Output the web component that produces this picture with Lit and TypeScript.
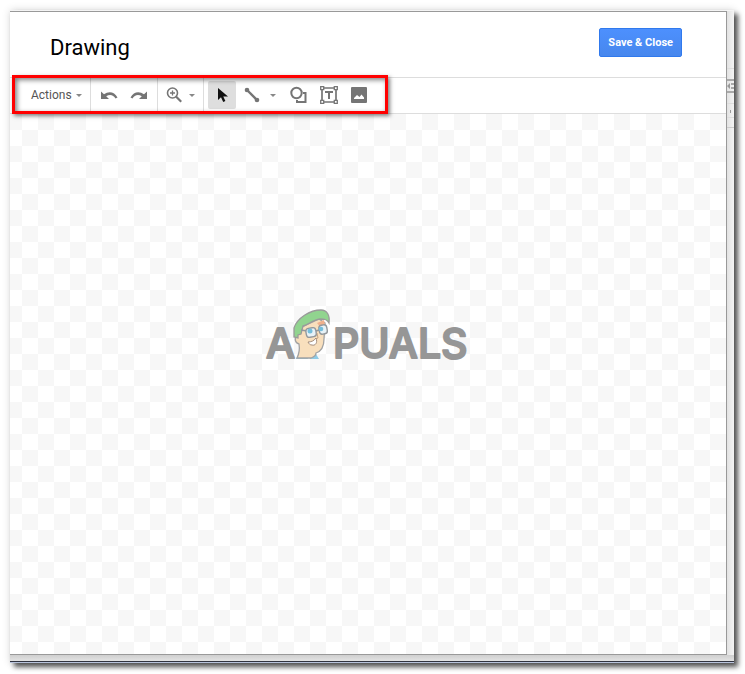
import { LitElement, html, css } from "lit";
import { customElement } from "lit/decorators.js";

@customElement("app-root")
export class AppRoot extends LitElement {
  static styles = css`
    :host {
      display: flex;
      box-sizing: border-box;
      min-height: 100vh;
      padding: 10px 11px 11px 10px;
      background: #fff;
      font-family: Roboto, "Liberation Sans", sans-serif;
    }
    .page {
      flex: 1;
      display: grid;
      grid-template: 1fr 8px / 1fr 7px;
      background: #f4f4f4;
      box-shadow: 4px 4px 5px 0 rgba(0, 0, 0, 0.65), 0 0 8px rgba(0, 0, 0, 0.15);
      padding-top: 1px;
    }
    .dialog {
      display: flex;
      flex-direction: column;
      background: #fff;
      border: 1px solid #999;
      border-left: 0;
    }
    .side {
      background: linear-gradient(90deg, #e2e2e2, #f4f4f4);
    }
    .side svg {
      display: block;
    }
    .foot {
      grid-column: 1 / -1;
      background: linear-gradient(#cfcfcf, #e6e6e6);
      border-bottom: 1px solid #b9c4dc;
      box-shadow: inset 0 -1px #30333f;
    }
    header {
      display: flex;
      justify-content: space-between;
      align-items: flex-start;
      box-sizing: border-box;
      height: 66px;
      padding: 16px 44px 0 40px;
      border-bottom: 1px solid #ddd;
    }
    h1 {
      margin: 4px 0 0;
      font-size: 22px;
      line-height: 32px;
      font-weight: 400;
      color: #000;
    }
    button {
      font-family: inherit;
      margin: 0;
      padding: 0;
      border: 0;
      background: none;
      cursor: pointer;
    }
    .save {
      box-sizing: border-box;
      height: 29px;
      padding: 0 8px;
      border: 1px solid #3079ed;
      border-radius: 2px;
      background: linear-gradient(#4d90fe, #4787ed);
      color: #fff;
      font-size: 11px;
      font-weight: 700;
      line-height: 27px;
    }
    .bar {
      display: flex;
      align-items: flex-start;
      height: 35px;
      border-bottom: 1px solid #ddd;
    }
    .tools {
      position: relative;
      display: flex;
      padding: 0 14px 0 21px;
    }
    .frame {
      position: absolute;
      inset: -3px 0 -2px 2px;
      border: 3px solid #f00;
      box-shadow: 2px 2px 4px rgba(0, 0, 0, 0.5), inset 2px 2px 5px rgba(0, 0, 0, 0.5);
      pointer-events: none;
    }
    .group {
      display: flex;
      align-items: center;
      height: 34px;
    }
    .group + .group {
      border-left: 1px solid #ddd;
    }
    .tool {
      display: flex;
      align-items: center;
      justify-content: center;
      height: 28px;
      width: 30px;
      color: #757575;
    }
    .tool svg,
    .caret svg {
      display: block;
      fill: currentColor;
    }
    .menu {
      width: auto;
      gap: 4px;
      padding-right: 8px;
      font-size: 12px;
      color: #555;
    }
    .menu svg {
      color: #888;
    }
    .caret {
      display: flex;
      align-items: center;
      justify-content: center;
      width: 8px;
      height: 28px;
      color: #888;
    }
    .history {
      padding: 0 3px;
    }
    .zoom {
      padding-right: 7px;
    }
    .zoom .tool {
      padding-left: 2px;
    }
    .shapes {
      padding-left: 4px;
    }
    .active {
      width: 28px;
      border-radius: 2px;
      background: #dedede;
      color: #111;
    }
    .line {
      width: 33px;
    }
    .line + .caret {
      margin-right: 7px;
    }
    .canvas {
      flex: 1;
      display: flex;
      justify-content: center;
      align-items: flex-start;
      padding-top: 194px;
      background: repeating-conic-gradient(#f7f7f7 0 25%, #fff 0 50%) 12px 0 / 32px 32px;
    }
    .mark {
      display: block;
      margin-left: 4px;
    }
    .mark text {
      fill: #969696;
      stroke: #969696;
      stroke-width: 2px;
      stroke-linejoin: round;
      font-family: Inter, sans-serif;
      font-size: 41px;
      font-weight: 500;
    }
  `;

  private caret() {
    return html`<svg width="6" height="3" viewBox="0 0 6 3" aria-hidden="true"><path d="M0 0h6L3 3z" /></svg>`;
  }

  render() {
    return html`
      <div class="page">
        <main class="dialog">
          <header>
            <h1>Drawing</h1>
            <button class="save">Save &amp; Close</button>
          </header>
          <div class="bar">
            <div class="tools" role="toolbar" aria-label="Drawing tools">
              <div class="group">
                <button class="tool menu">Actions ${this.caret()}</button>
              </div>
              <div class="group history">
                <button class="tool" aria-label="Undo">
                  <svg width="18" height="18" viewBox="0 0 18 18">
                    <path d="M1 5.500v7.500h8L6.200 10.200C10 8 13.500 9 15.500 12.500L17.500 11.600C14.500 5.500 8.500 4.800 4 8.300z" />
                  </svg>
                </button>
                <button class="tool" aria-label="Redo">
                  <svg width="18" height="18" viewBox="0 0 18 18">
                    <path d="M17 5.500v7.500H9L11.800 10.200C8 8 4.500 9 2.500 12.500L.5 11.600C3.500 5.500 9.500 4.800 14 8.300z" />
                  </svg>
                </button>
              </div>
              <div class="group zoom">
                <button class="tool" aria-label="Zoom">
                  <svg width="16" height="16" viewBox="0 0 16 16">
                    <g fill="none" stroke="currentColor">
                      <circle cx="6.500" cy="6" r="5" stroke-width="1.600" />
                      <path d="M6.500 3.500v5M4 6h5" stroke-width="1.300" />
                      <path d="M10 9.500l5.200 5.200" stroke-width="2.200" />
                    </g>
                  </svg>
                </button>
                <button class="caret" aria-label="Zoom options">${this.caret()}</button>
              </div>
              <div class="group shapes">
                <button class="tool active" aria-label="Select" aria-pressed="true">
                  <svg width="12" height="16" viewBox="0 0 12 16">
                    <path d="M2 1v12l3-2.800L7.200 15l2.200-1L7.300 9.500H12z" />
                  </svg>
                </button>
                <button class="tool line" aria-label="Line">
                  <svg width="16" height="16" viewBox="0 0 16 16">
                    <path d="M3 3l10 10" stroke="currentColor" stroke-width="2.400" />
                    <circle cx="3" cy="3" r="2.300" /><circle cx="13" cy="13" r="2.300" />
                  </svg>
                </button>
                <button class="caret" aria-label="Line options">${this.caret()}</button>
                <button class="tool" aria-label="Shape">
                  <svg width="18" height="18" viewBox="0 0 18 18">
                    <circle cx="6.500" cy="7" r="5.200" fill="none" stroke="currentColor" stroke-width="2" />
                    <path d="M13 6h3.500v11H6v-3h2v1h6.500V8H13z" />
                  </svg>
                </button>
                <button class="tool" aria-label="Text box">
                  <svg width="18" height="18" viewBox="0 0 18 18">
                    <g fill="none" stroke="currentColor" stroke-width="1.300">
                      <path d="M4 2h10M4 16h10M2 4v10M16 4v10" stroke-width="1.700" />
                      <path d="M.7.7h3v3h-3zM14.300.7h3v3h-3zM.7 14.300h3v3h-3zM14.300 14.300h3v3h-3z" />
                    </g>
                    <path d="M5 5h8v2h-3v6H8V7H5z" />
                  </svg>
                </button>
                <button class="tool" aria-label="Image">
                  <svg width="16" height="16" viewBox="0 0 16 16">
                    <path
                      fill-rule="evenodd"
                      d="M1 0h14a1 1 0 0 1 1 1v14a1 1 0 0 1-1 1H1a1 1 0 0 1-1-1V1a1 1 0 0 1 1-1zM3 12h10v-1.500L10.500 7.500 8.500 10 6 8 3 11z"
                    />
                  </svg>
                </button>
              </div>
              <div class="frame"></div>
            </div>
          </div>
          <section class="canvas" aria-label="Canvas">
            <svg class="mark" width="216" height="70" viewBox="-4 0 216 70" role="img" aria-label="APPUALS">
              <text x="0" y="50">A</text>
              <text x="67" y="50">PUALS</text>
              <g transform="translate(26 1)">
                <path d="M4 50C5 47 7 45 9 45l8 5zM17 50l7-5 3 5z" fill="#8fcbe6" />
                <path
                  d="M5 27C2 29 3 34 7 35C8 41 7 45 5 49H19C22 48 24 46 24 44 30 42 32 36 32 30L33 14 27 10 8 19z"
                  fill="#f8dfbd" stroke="#a2a2a2" stroke-width="1.300"
                />
                <path d="M25 14l7-3 2 9-5-1z" fill="#f0b08c" />
                <path
                  d="M2 19C5 9 18 1 29 1c6 0 9 5 8 13C35 10 32 10 28 10 20 11 16 16 11 17l-2 8-3 1v3l-4-1z"
                  fill="#91d48f" stroke="#9a9a9a" stroke-width="1.300"
                />
                <g stroke="#92989c" stroke-width="1.400">
                  <path d="M9 21l6 1" />
                  <rect x="14" y="19" width="10" height="9" rx="3" transform="rotate(-10 19 23)" fill="#e7f2f7" />
                  <rect x="27" y="16" width="8" height="9" rx="3" transform="rotate(-10 31 20)" fill="#e7f2f7" />
                  <path d="M24 22l3-1" />
                </g>
                <circle cx="18" cy="22" r="2.500" fill="#74bedc" />
                <circle cx="29" cy="20" r="2.300" fill="#74bedc" />
                <path d="M25 24l1 5-3 1" fill="none" stroke="#c6a684" />
                <path d="M16 33c3 0 6-1 8-4 2 5-1 8-4 7-2 0-3-1-4-3z" fill="#fff" stroke="#a48e7d" />
              </g>
            </svg>
          </section>
        </main>
        <aside class="side" aria-hidden="true">
          <svg width="7" height="130" viewBox="0 0 7 130">
            <path d="M0 57.500h7M0 92.500h7M0 106.500h7" stroke="#ddd" />
            <path d="M0 69h7M0 81h7M4 73h3M4 77h3" stroke="#aaa" stroke-width="2" />
            <path d="M0 75l3-3v6zM3 99h1v3H3z" fill="#999" />
            <path d="M0 116.500h7" stroke="#ccc" />
          </svg>
        </aside>
        <div class="foot"></div>
      </div>
    `;
  }
}
